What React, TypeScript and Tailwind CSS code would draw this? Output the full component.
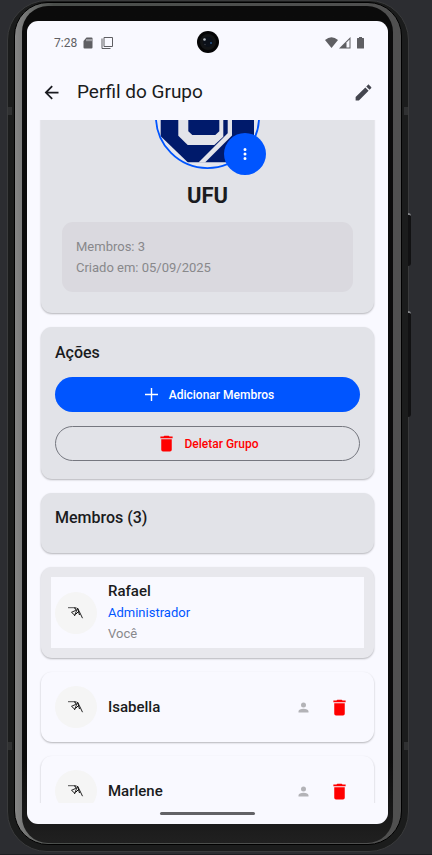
import type { ReactNode } from 'react';

const TRASH = 'M19,4H15.5L14.5,3H9.5L8.5,4H5V6H19M6,19A2,2 0 0,0 8,21H16A2,2 0 0,0 18,19V7H6V19Z';
const ACCOUNT = 'M12,4A4,4 0 0,1 16,8A4,4 0 0,1 12,12A4,4 0 0,1 8,8A4,4 0 0,1 12,4M12,14C16.42,14 20,15.79 20,18V20H4V18C4,15.79 7.58,14 12,14Z';
const PENCIL = 'M20.71,7.04C21.1,6.65 21.1,6 20.71,5.63L18.37,3.29C18,2.9 17.35,2.9 16.96,3.29L15.12,5.12L18.87,8.87M3,17.25V21H6.75L17.81,9.93L14.06,6.18L3,17.25Z';
const ARROW = 'M20,11V13H8L13.5,18.5L12.08,19.92L4.16,12L12.08,4.08L13.5,5.5L8,11H20Z';
const DOTS = 'M12,16A2,2 0 0,1 14,18A2,2 0 0,1 12,20A2,2 0 0,1 10,18A2,2 0 0,1 12,16M12,10A2,2 0 0,1 14,12A2,2 0 0,1 12,14A2,2 0 0,1 10,12A2,2 0 0,1 12,10M12,4A2,2 0 0,1 14,6A2,2 0 0,1 12,8A2,2 0 0,1 10,6A2,2 0 0,1 12,4Z';

function Icon({ d, className }: { d: string; className: string }) {
  return (
    <svg viewBox="0 0 24 24" fill="currentColor" className={className} aria-hidden="true">
      <path d={d} />
    </svg>
  );
}

function Card({ children, className = '' }: { children: ReactNode; className?: string }) {
  return (
    <section className={`shrink-0 rounded-[11px] shadow-[0_1px_2px_rgba(0,0,0,0.28)] ${className}`}>
      {children}
    </section>
  );
}

function StatusBar() {
  return (
    <div className="relative flex h-[43px] shrink-0 items-center justify-between pr-[24px] pl-[27px] text-[#5f5f63]">
      <div className="flex items-center">
        <span className="text-[12px]">7:28</span>
        <svg viewBox="0 0 10 12" className="ml-[6px] h-[12px] w-[10px]" aria-hidden="true">
          <path d="M3.5 .5H8.5Q9.5 .5 9.5 1.5V10.5Q9.5 11.5 8.5 11.5H1.5Q.5 11.5 .5 10.5V4Z" fill="currentColor" />
          <path d="M4 2v2.2M6 2v2.2M8 2v2.2" stroke="#f9f9ff" strokeWidth=".8" />
        </svg>
        <svg viewBox="0 0 12 12" className="ml-[8px] h-[12px] w-[12px]" fill="none" stroke="currentColor" aria-hidden="true">
          <path d="M3 .5h8.5v9H3zM1 1.5v10h8.500" />
        </svg>
      </div>
      <div className="flex items-center">
        <svg viewBox="0 0 13 11" className="h-[11px] w-[13px]" fill="currentColor" aria-hidden="true">
          <path d="M0 3Q6.500 -2.500 13 3L6.500 11Z" />
        </svg>
        <svg viewBox="0 0 12 12" className="ml-px h-[12px] w-[12px]" aria-hidden="true">
          <path d="M0 11.500L11.500 0V11.500Z" fill="currentColor" />
          <path d="M7.500 5.500L10.500 2.500V10.500H7.500Z" fill="#f9f9ff" />
        </svg>
        <svg viewBox="0 0 7 12" className="ml-[6px] h-[12px] w-[7px]" fill="currentColor" aria-hidden="true">
          <path d="M2 0h3v1h1.500q.5 0 .5.500V11q0 .5-.5.500h-6Q0 11.500 0 11V1.500Q0 1 .5 1H2Z" />
        </svg>
      </div>
      <svg viewBox="0 0 22 22" className="absolute inset-x-0 top-[10px] mx-auto h-[22px] w-[22px]" aria-hidden="true">
        <circle cx="11" cy="11" r="11" fill="#050506" />
        <circle cx="11" cy="11" r="8" fill="#121416" />
        <circle cx="11" cy="11" r="5" fill="#0b1019" />
        <circle cx="7.500" cy="8.500" r="1.300" fill="#b9bfc6" />
        <circle cx="14" cy="12" r="1" fill="#28548a" />
        <circle cx="8" cy="13.500" r=".7" fill="#40434a" />
      </svg>
    </div>
  );
}

function GroupLogo() {
  return (
    <svg viewBox="0 0 105 105" className="h-[105px] w-[105px]" role="img" aria-label="UFU">
      <defs>
        <clipPath id="logo-clip">
          <circle cx="52.500" cy="52.500" r="51.500" />
        </clipPath>
      </defs>
      <g clipPath="url(#logo-clip)">
        <path d="M0 0H105V105H0Z" fill="#e6e7ee" />
        <path d="M5.700 5H99V98.300H32.700L5.700 72.300Z" fill="#001a6b" />
        <path d="M23.300 20H68.300V72.700L59.300 81H32.700L23.300 71.700Z" fill="#e3e4ea" />
        <path d="M33.300 30H64.300V67.300L60.300 71H37.300L33.300 67.300Z" fill="#001a6b" />
        <path d="M72.700 5H77V71.500L50 98.500H43.500L72.700 69.300Z" fill="#e3e4ea" />
      </g>
      <circle cx="52.500" cy="52.500" r="51.600" fill="none" stroke="#0055ff" strokeWidth="1.800" />
    </svg>
  );
}

function Avatar() {
  return (
    <svg viewBox="0 0 42 42" className="h-[42px] w-[42px] shrink-0" aria-hidden="true">
      <circle cx="21" cy="21" r="21" fill="#f5f5f5" />
      <g fill="none" stroke="#0b0b0b" strokeLinejoin="round">
        <path d="M13 15.700H21.500" strokeWidth=".7" />
        <path d="M19 15.800Q22 16.500 20.500 18.500L16.500 20.300L20 23.500" strokeWidth=".9" />
        <path d="M19.500 24L22.500 16L25.500 22L27.500 26.200" strokeWidth=".9" />
        <path d="M20.500 22.500L23 20M22.800 17L24.500 23" strokeWidth="1" />
      </g>
    </svg>
  );
}

function Member({ name }: { name: string }) {
  return (
    <Card className="flex items-center bg-[#f9f9ff] p-[14px]">
      <Avatar />
      <h3 className="ml-[11px] flex-1 text-[15px] leading-[21px] font-medium">{name}</h3>
      <button type="button" aria-label={`Promover ${name}`} className="flex w-[29px] justify-center text-[#b3b3b7]">
        <Icon d={ACCOUNT} className="h-[15px] w-[15px]" />
      </button>
      <button type="button" aria-label={`Remover ${name}`} className="flex w-[42px] justify-center text-[#ff0000]">
        <Icon d={TRASH} className="h-[21px] w-[21px]" />
      </button>
    </Card>
  );
}

export default function App() {
  return (
    <div className="h-screen overflow-hidden bg-[#2c2d31] pr-[23px] pb-[3px] pl-[7px] font-[Roboto,sans-serif] text-[#1a1b20] shadow-[inset_0_-1px_0_#1d1e21]">
      <div className="relative h-full rounded-[40px] border border-[#3a3b3c] bg-[#1b1c1c] px-[6px] pt-px pb-[6px]">
        <div className="h-full rounded-[34px] border border-black bg-linear-to-r from-[#858585] via-[#4a4e4b] via-10% to-[#505050] pt-[3px] pr-[8px] pb-px pl-[7px]">
          <div className="h-full rounded-[26px] bg-linear-to-b from-[#0b0b0b] from-90% to-[#202020] px-[5px] pt-[15px] pb-[19px]">
            <main className="flex h-full flex-col overflow-hidden rounded-[11px] bg-[#f9f9ff]">
              <StatusBar />
              <header className="flex h-[56px] shrink-0 items-center px-[14px]">
                <button type="button" aria-label="Voltar">
                  <Icon d={ARROW} className="h-[21px] w-[21px]" />
                </button>
                <h1 className="ml-[15px] flex-1 text-[19px] leading-[24px]">Perfil do Grupo</h1>
                <button type="button" aria-label="Editar" className="text-[#44464f]">
                  <Icon d={PENCIL} className="h-[21px] w-[21px]" />
                </button>
              </header>

              <div className="flex min-h-0 flex-1 flex-col gap-[14px] overflow-hidden px-[14px]">
                <Card className="-mt-[70px] flex flex-col items-center bg-[#e2e3e8] px-[21px] pt-[14px] pb-[21px]">
                  <div className="relative">
                    <GroupLogo />
                    <button
                      type="button"
                      aria-label="Opções da foto"
                      className="absolute -right-[6px] -bottom-[6px] flex h-[42px] w-[42px] items-center justify-center rounded-full bg-[#0055ff] text-white"
                    >
                      <Icon d={DOTS} className="h-[18px] w-[18px]" />
                    </button>
                  </div>
                  <h2 className="mt-[13px] text-[22px] leading-[28px] font-bold">UFU</h2>
                  <div className="mt-[12px] w-full rounded-[11px] bg-[#dad9df] p-[14px] text-[13px] leading-[21px] text-[#88888b]">
                    <p>Membros: 3</p>
                    <p>Criado em: 05/09/2025</p>
                  </div>
                </Card>

                <Card className="bg-[#e2e3e8] px-[14px] pt-[15px] pb-[18px]">
                  <h2 className="text-[16px] leading-[21px] font-medium">Ações</h2>
                  <button
                    type="button"
                    className="mt-[14px] flex h-[35px] w-full items-center justify-center gap-[7px] rounded-full bg-[#0055ff] text-[12px] font-medium text-white"
                  >
                    <svg viewBox="0 0 21 21" className="h-[21px] w-[21px]" stroke="currentColor" strokeWidth="1.400" aria-hidden="true">
                      <path d="M4 10.500H17M10.500 4V17" />
                    </svg>
                    Adicionar Membros
                  </button>
                  <button
                    type="button"
                    className="mt-[14px] flex h-[35px] w-full items-center justify-center gap-[7px] rounded-full border border-[#75777f] text-[12px] font-medium text-[#ff0000]"
                  >
                    <Icon d={TRASH} className="h-[21px] w-[21px]" />
                    Deletar Grupo
                  </button>
                </Card>

                <Card className="bg-[#e2e3e8] px-[14px] pt-[14px] pb-[25px]">
                  <h2 className="text-[16px] leading-[21px] font-medium">Membros (3)</h2>
                </Card>

                <Card className="bg-[#e8e8ed] p-[10px]">
                  <div className="flex items-center bg-[#f9f9ff] p-[4px]">
                    <Avatar />
                    <div className="ml-[11px] text-[13px] leading-[21px]">
                      <h3 className="text-[15px] leading-[21px] font-medium">Rafael</h3>
                      <p className="text-[#0055ff]">Administrador</p>
                      <p className="text-[#88888b]">Você</p>
                    </div>
                  </div>
                </Card>

                <Member name="Isabella" />
                <Member name="Marlene" />
              </div>

              <div className="flex h-[21px] shrink-0 items-center justify-center">
                <div className="h-[3px] w-[95px] rounded-full bg-[#626266]" />
              </div>
            </main>
          </div>
        </div>
        <span className="absolute top-[212px] -right-[3px] h-[53px] w-[3px] rounded-r-sm border-t-2 border-[#85878a] bg-[#111112]" />
        <span className="absolute top-[310px] -right-[3px] h-[106px] w-[3px] rounded-r-sm border-t-2 border-[#85878a] bg-[#111112]" />
        <span className="absolute top-[106px] left-0 h-[8px] w-[4px] bg-[#303132]" />
        <span className="absolute top-[106px] right-0 h-[8px] w-[4px] bg-[#303132]" />
        <span className="absolute bottom-[101px] left-0 h-[8px] w-[4px] bg-[#303132]" />
        <span className="absolute right-0 bottom-[101px] h-[8px] w-[4px] bg-[#303132]" />
      </div>
    </div>
  );
}
